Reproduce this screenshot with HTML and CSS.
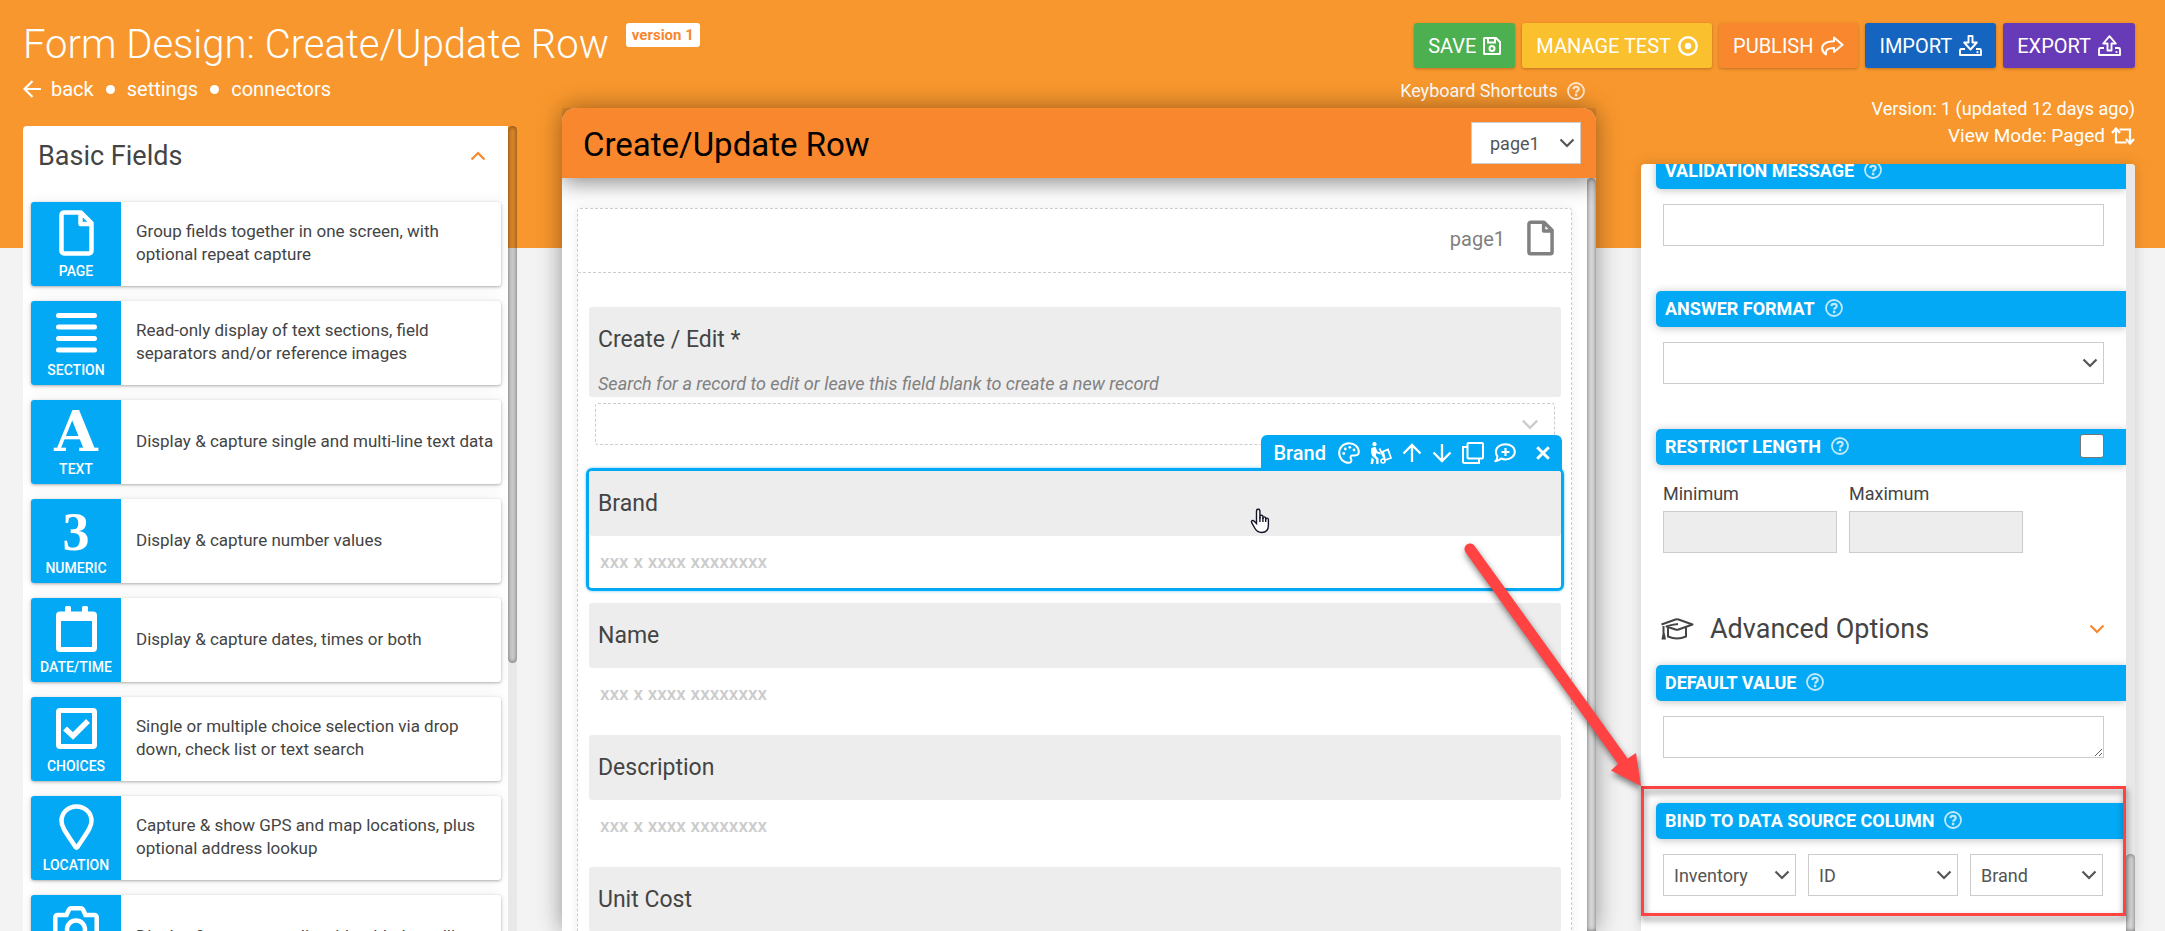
FILE: index.html
```html
<!DOCTYPE html>
<html lang="en">
<head>
<meta charset="utf-8">
<title>Form Design: Create/Update Row</title>
<link rel="stylesheet" href="styles.css">
</head>
<body>
<svg class="defs" aria-hidden="true">
  <symbol id="i-file" viewBox="0 0 35 46"><path d="M5.500 2.500h16.500l10.500 10.500v28a2.500 2.500 0 0 1-2.500 2.500h-25a2.500 2.500 0 0 1-2.500-2.500v-36a2.500 2.500 0 0 1 3-2.500zM21.500 3v11h11" fill="none" stroke="currentColor" stroke-width="4.500" stroke-linejoin="round"/></symbol>
  <symbol id="i-help" viewBox="0 0 18 18"><circle cx="9" cy="9" r="8" fill="none" stroke="currentColor" stroke-width="1.800"/><path d="M6.400 7.100c.1-3.100 5.300-3.100 5.300 0 0 1.900-2.500 1.900-2.600 3.500" fill="none" stroke="currentColor" stroke-width="2.200"/><circle cx="9.100" cy="13" r="1.400" fill="currentColor"/></symbol>
  <symbol id="i-down" viewBox="0 0 16 10"><path d="M1.500 1.500L8 8l6.500-6.500" fill="none" stroke="currentColor" stroke-width="2.200"/></symbol>
</svg>
<div class="page">
  <header class="top">
    <div class="top-left">
      <div class="title-row">
        <h1 class="title">Form Design: Create/Update Row</h1>
        <span class="badge">version 1</span>
      </div>
      <nav class="crumbs">
        <a href="#back" class="back"><svg width="18" height="18" viewBox="0 0 18 18"><path d="M18 9H2M9.500 1L1.500 9l8 8" fill="none" stroke="currentColor" stroke-width="2.200"/></svg>back</a>
        <span class="dot"></span>
        <a href="#settings">settings</a>
        <span class="dot"></span>
        <a href="#connectors">connectors</a>
      </nav>
    </div>
    <div class="top-right">
      <div class="actions">
        <button type="button" class="btn save">SAVE<svg width="18" height="18" viewBox="0 0 18 18"><g fill="none" stroke="currentColor" stroke-width="2"><path d="M1.500 1h11.500l4 4v11.500a.5.5 0 0 1-.5.5h-15a.5.5 0 0 1-.5-.5v-15a.5.5 0 0 1 .5-.5z"/><path d="M5 1v4.500h7V1"/><circle cx="9" cy="11.500" r="2.500"/></g></svg></button>
        <button type="button" class="btn test">MANAGE TEST<svg width="20" height="20" viewBox="0 0 20 20"><circle cx="10" cy="10" r="8.700" fill="none" stroke="currentColor" stroke-width="2.400"/><circle cx="10" cy="10" r="3.200" fill="currentColor"/></svg></button>
        <button type="button" class="btn publish">PUBLISH<svg width="24" height="20" viewBox="0 0 24 20"><path d="M14 1.500l8.500 7.200-8.500 7.200v-4c-6 0-8.500 1.600-8 6.600-6-4.500-6-13 8-13.200z" fill="none" stroke="currentColor" stroke-width="2" stroke-linejoin="round"/></svg></button>
        <button type="button" class="btn import">IMPORT<svg width="23" height="21" viewBox="0 0 23 21"><g fill="none" stroke="currentColor" stroke-width="1.900" stroke-linejoin="round"><path d="M9.500 1h4v6.500h4.300l-6.300 7-6.300-7h4.300z"/><path d="M6 14H2.500a1.500 1.500 0 0 0-1.500 1.500V20h21v-4.500a1.500 1.500 0 0 0-1.500-1.500H17"/></g><circle cx="18.500" cy="17.200" r="1.100" fill="currentColor"/></svg></button>
        <button type="button" class="btn export">EXPORT<svg width="23" height="21" viewBox="0 0 23 21"><g fill="none" stroke="currentColor" stroke-width="1.900" stroke-linejoin="round"><path d="M9.500 15.500h4V8.500h4.300l-6.300-7.300-6.300 7.300h4.300z"/><path d="M6 13H2.500a1.500 1.500 0 0 0-1.500 1.500V20h21v-5.500a1.500 1.500 0 0 0-1.500-1.500H17"/></g><circle cx="18.500" cy="17" r="1.100" fill="currentColor"/></svg></button>
      </div>
      <a href="#shortcuts" class="shortcuts">Keyboard Shortcuts<svg class="help" width="18" height="18"><use href="#i-help"/></svg></a>
    </div>
  </header>

  <main class="columns">
    <aside class="palette">
      <div class="palette-body">
        <div class="palette-head">
          <h2>Basic Fields</h2>
          <button type="button" class="fold up" aria-label="Collapse basic fields"><svg width="16" height="10"><use href="#i-down"/></svg></button>
        </div>
        <ul class="cards">
          <li class="card"><div class="tile"><div class="glyph"><svg width="35" height="46"><use href="#i-file"/></svg></div><span>PAGE</span></div><p>Group fields together in one screen, with optional repeat capture</p></li>
          <li class="card"><div class="tile"><div class="glyph"><svg width="41" height="41" viewBox="0 0 41 41"><path d="M2.500 3.500h36M2.500 15h36M2.500 26.500h36M2.500 38h36" stroke="currentColor" stroke-width="5" stroke-linecap="round"/></svg></div><span>SECTION</span></div><p>Read-only display of text sections, field separators and/or reference images</p></li>
          <li class="card"><div class="tile"><div class="glyph letter">A</div><span>TEXT</span></div><p>Display &amp; capture single and multi-line text data</p></li>
          <li class="card"><div class="tile"><div class="glyph digit">3</div><span>NUMERIC</span></div><p>Display &amp; capture number values</p></li>
          <li class="card"><div class="tile"><div class="glyph"><svg width="41" height="46" viewBox="0 0 41 46"><path d="M4 8h33a1.500 1.500 0 0 1 1.500 1.500V42a1.500 1.500 0 0 1-1.500 1.500H4A1.500 1.500 0 0 1 2.500 42V9.500A1.500 1.500 0 0 1 4 8z" fill="none" stroke="currentColor" stroke-width="5"/><path d="M3 8h35v7H3zM9 1.500a1.500 1.500 0 0 1 1.500-1.500h3a1.500 1.500 0 0 1 1.500 1.500V8H9zM26 1.500a1.500 1.500 0 0 1 1.500-1.500h3a1.500 1.500 0 0 1 1.500 1.500V8h-6z" fill="currentColor"/></svg></div><span>DATE/TIME</span></div><p>Display &amp; capture dates, times or both</p></li>
          <li class="card"><div class="tile"><div class="glyph"><svg width="41" height="41" viewBox="0 0 41 41"><rect x="2.500" y="2.500" width="36" height="36" rx="1.500" fill="none" stroke="currentColor" stroke-width="5"/><path d="M9 20.500l8 7.500 15-15" fill="none" stroke="currentColor" stroke-width="5.500"/></svg></div><span>CHOICES</span></div><p>Single or multiple choice selection via drop down, check list or text search</p></li>
          <li class="card"><div class="tile"><div class="glyph"><svg width="35" height="46" viewBox="0 0 35 46"><path d="M17.500 2.500c8.500 0 15 6.300 15 14.500 0 6-4.500 11.500-14 26q-1 1-2 0C7 28.500 2.500 23 2.500 17c0-8.200 6.500-14.500 15-14.500z" fill="none" stroke="currentColor" stroke-width="4.500"/></svg></div><span>LOCATION</span></div><p>Capture &amp; show GPS and map locations, plus optional address lookup</p></li>
          <li class="card"><div class="tile"><div class="glyph"><svg width="46" height="41" viewBox="0 0 46 41"><path d="M4.500 9h9l2.500-5.500q.5-1.200 2-1.200h10q1.500 0 2 1.200L32.500 9h9a2.200 2.200 0 0 1 2.200 2.200v25a2.200 2.200 0 0 1-2.200 2.200h-37a2.200 2.200 0 0 1-2.200-2.200v-25A2.200 2.200 0 0 1 4.500 9z" fill="none" stroke="currentColor" stroke-width="4.500"/><circle cx="23" cy="23.500" r="9" fill="none" stroke="currentColor" stroke-width="4.500"/></svg></div></div><p>Display &amp; capture media with added scrolling</p></li>
        </ul>
      </div>
      <div class="track"><div class="thumb palette-thumb"></div></div>
    </aside>

    <section class="canvas">
      <div class="canvas-head">
        <h2>Create/Update Row</h2>
        <label class="pick head-pick"><select aria-label="Page"><option>page1</option></select><svg width="16" height="10"><use href="#i-down"/></svg></label>
      </div>
      <div class="canvas-scroll">
        <div class="sheet">
          <div class="sheet-head"><span>page1</span><svg width="27" height="36"><use href="#i-file"/></svg></div>
          <div class="fields">
            <div class="field">
              <div class="field-head tall"><h3>Create / Edit *</h3><p class="hint">Search for a record to edit or leave this field blank to create a new record</p></div>
              <div class="lookup"><svg width="18" height="11"><use href="#i-down"/></svg></div>
            </div>
            <div class="field selected">
              <div class="tools">
                <span class="tools-name">Brand</span>
                <button type="button" aria-label="Appearance"><svg width="22" height="22" viewBox="0 0 22 22"><path d="M11 1.200c5.500 0 9.800 3.800 9.800 8.600 0 2.400-1.600 3.600-3.800 3.600h-2.700c-1.500 0-2.300 1.600-1.500 2.800 1.200 1.900.7 4.600-1.800 4.600C5.500 20.800 1.200 16.500 1.200 11S5.500 1.200 11 1.200z" fill="none" stroke="currentColor" stroke-width="2"/><g fill="currentColor"><circle cx="5.700" cy="11.500" r="1.400"/><circle cx="7.300" cy="7" r="1.400"/><circle cx="11.800" cy="5.300" r="1.400"/><circle cx="16" cy="8" r="1.400"/></g></svg></button>
                <button type="button" aria-label="Move"><svg width="22" height="22" viewBox="0 0 22 22"><circle cx="4.500" cy="2.200" r="2.100" fill="currentColor"/><path d="M1 6.500q2-2 4.500-1.500l2 4.500 3 1v2l-4.200-1.300-.5 2.500 2.700 2.800V22H6.200v-4.500l-4-3.500q-1.500-3-1.200-7.500zM1.500 15.500l2.500 2-1 4.500H.6z" fill="currentColor"/><path d="M9.500 6.500l5 10M13 9.500l5-2 3 8.500-6 2z" fill="none" stroke="currentColor" stroke-width="1.800"/><circle cx="13" cy="19" r="2" fill="none" stroke="currentColor" stroke-width="1.600"/></svg></button>
                <button type="button" aria-label="Move up"><svg width="20" height="20" viewBox="0 0 20 20"><path d="M10 19V2M1.500 10.500L10 2l8.500 8.500" fill="none" stroke="currentColor" stroke-width="2.300"/></svg></button>
                <button type="button" aria-label="Move down"><svg width="20" height="20" viewBox="0 0 20 20"><path d="M10 1v17M1.500 9.500L10 18l8.500-8.500" fill="none" stroke="currentColor" stroke-width="2.300"/></svg></button>
                <button type="button" aria-label="Duplicate"><svg width="22" height="22" viewBox="0 0 22 22"><g fill="none" stroke="currentColor" stroke-width="2"><rect x="5.500" y="1" width="15.500" height="15.500" rx="1"/><path d="M5 5H1v14.500q0 1.500 1.500 1.500H17v-4"/></g></svg></button>
                <button type="button" aria-label="Comment"><svg width="22" height="20" viewBox="0 0 22 20"><path d="M11.500 1.200c5 0 9.300 3 9.300 7.600s-4.300 7.600-9.300 7.600c-1.800 0-3-.3-4.300-.9-1.700 1.600-3.700 2.700-5.900 2.700 1.200-1 2.100-3 2.100-4.800-1-1.300-1.500-2.900-1.500-4.600 0-4.600 4.600-7.600 9.600-7.600z" fill="none" stroke="currentColor" stroke-width="2" stroke-linejoin="round"/><path d="M11.500 5v8M7.500 9h8" stroke="currentColor" stroke-width="2.200"/></svg></button>
                <button type="button" class="close" aria-label="Close"><svg width="14" height="14" viewBox="0 0 14 14"><path d="M1.200 1.200l11.600 11.600M12.800 1.200L1.200 12.800" stroke="currentColor" stroke-width="3"/></svg></button>
              </div>
              <div class="field-head"><h3>Brand</h3></div>
              <p class="mask">xxx x xxxx xxxxxxxx</p>
              <svg class="cursor" width="20" height="26" viewBox="0 0 20 26"><path d="M6.500 15.500V3a1.700 1.700 0 0 1 3.400 0v7.500V8.500a1.500 1.500 0 0 1 3 .4v2-1.200a1.500 1.500 0 0 1 2.800.4v1.700-.8a1.400 1.400 0 0 1 2.700.5V17c0 4.500-2.500 7.500-6.700 7.500-4 0-5.700-2-7-4.500l-3-5.300c-.9-1.800 1-3 2.300-1.700z" fill="#fff" stroke="#15152a" stroke-width="1.400"/><path d="M9.900 9v5M12.900 10v4M15.700 11v3" stroke="#15152a" stroke-width="1.400"/></svg>
            </div>
            <div class="field"><div class="field-head"><h3>Name</h3></div><p class="mask">xxx x xxxx xxxxxxxx</p></div>
            <div class="field"><div class="field-head"><h3>Description</h3></div><p class="mask">xxx x xxxx xxxxxxxx</p></div>
            <div class="field"><div class="field-head"><h3>Unit Cost</h3></div></div>
          </div>
        </div>
        <div class="track"><div class="thumb canvas-thumb"></div></div>
      </div>
    </section>

    <aside class="side">
      <p class="version">Version: 1 (updated 12 days ago)</p>
      <a href="#view" class="view">View Mode: Paged<svg width="24" height="18" viewBox="0 0 24 18"><g fill="none" stroke="currentColor" stroke-width="2.200"><path d="M5 2v13.500h10.500M1 6l4-4.500L9 6M19 16V2.500H8.500M15 12l4 4.500 4-4.500"/></g></svg></a>
      <div class="props">
        <div class="props-body">
          <div class="prop">
            <div class="bar"><label for="msg">VALIDATION MESSAGE</label><svg class="help" width="18" height="18"><use href="#i-help"/></svg></div>
            <input id="msg" class="box" type="text">
          </div>
          <div class="prop">
            <div class="bar"><label for="fmt">ANSWER FORMAT</label><svg class="help" width="18" height="18"><use href="#i-help"/></svg></div>
            <div class="pick wide"><select id="fmt"><option></option></select><svg width="16" height="10"><use href="#i-down"/></svg></div>
          </div>
          <div class="prop">
            <div class="bar"><label for="restrict">RESTRICT LENGTH</label><svg class="help" width="18" height="18"><use href="#i-help"/></svg><input id="restrict" class="tick" type="checkbox"></div>
            <div class="range">
              <label>Minimum<input type="text" disabled></label>
              <label>Maximum<input type="text" disabled></label>
            </div>
          </div>
          <div class="advanced">
            <svg width="34" height="23" viewBox="0 0 34 23"><g fill="none" stroke="currentColor" stroke-width="2" stroke-linejoin="round"><path d="M1.500 6.500L15.500 1.500q1.500-.5 3 0L32.500 6.500 18.500 11.500q-1.500.5-3 0L6.500 8.500Q12 6.500 18 6M8 9.500v9q9 4 18 0v-9M3.500 8v7"/></g><path d="M1.500 21.500l1.200-6.500h2l1.300 6.500z" fill="currentColor"/></svg>
            <h2>Advanced Options</h2>
            <button type="button" class="fold" aria-label="Toggle advanced options"><svg width="16" height="10"><use href="#i-down"/></svg></button>
          </div>
          <div class="prop">
            <div class="bar"><label for="def">DEFAULT VALUE</label><svg class="help" width="18" height="18"><use href="#i-help"/></svg></div>
            <textarea id="def" class="box"></textarea>
          </div>
          <div class="prop">
            <div class="bar"><span>BIND TO DATA SOURCE COLUMN</span><svg class="help" width="18" height="18"><use href="#i-help"/></svg></div>
            <div class="binds">
              <label class="pick"><select aria-label="Data source"><option>Inventory</option></select><svg width="16" height="10"><use href="#i-down"/></svg></label>
              <label class="pick"><select aria-label="Key column"><option>ID</option></select><svg width="16" height="10"><use href="#i-down"/></svg></label>
              <label class="pick"><select aria-label="Bound column"><option>Brand</option></select><svg width="16" height="10"><use href="#i-down"/></svg></label>
            </div>
          </div>
        </div>
        <div class="track"><div class="thumb props-thumb"></div></div>
      </div>
      <div class="callout"></div>
      <svg class="arrow" width="190" height="256" viewBox="0 0 190 256"><path d="M9 9L161 220" stroke="#ff4343" stroke-width="11" stroke-linecap="round"/><path d="M180 246l-30-15.500 7-6.500 9-5 9-6z" fill="#ff4343"/></svg>
    </aside>
  </main>
</div>
</body>
</html>
```

FILE: styles.css
```css
* { box-sizing: border-box; }
body { margin: 0; font-family: Roboto, "Liberation Sans", sans-serif; color: #444; }
h1, h2, h3, p, ul { margin: 0; padding: 0; font-weight: 400; }
a { color: inherit; text-decoration: none; }
button { font: inherit; color: inherit; border: 0; background: none; padding: 0; cursor: pointer; }
svg { display: block; flex: none; }
.defs { position: absolute; width: 0; height: 0; }

.page { height: 100vh; overflow: hidden; display: flex; flex-direction: column; background: linear-gradient(#f8972d 248px, #f3f3f3 248px); }

.top { display: flex; justify-content: space-between; height: 108px; flex: none; padding: 16px 30px 0 23px; color: #fff; }
.title-row { display: flex; gap: 17px; }
.title { font-size: 40px; line-height: 57px; font-weight: 300; white-space: nowrap; }
.badge { margin-top: 7px; height: 24px; padding: 0 6px; border-radius: 3px; background: #fff; color: #f8872d; font-size: 15px; line-height: 25px; font-weight: 700; white-space: nowrap; }
.crumbs { display: flex; align-items: center; gap: 12px; height: 32px; font-size: 20px; }
.back { display: flex; align-items: center; gap: 10px; }
.dot { width: 9px; height: 9px; border-radius: 50%; background: #fff; }

.top-right { padding-top: 7px; }
.actions { display: flex; gap: 7px; padding-left: 14px; }
.btn { display: flex; align-items: center; gap: 7px; height: 45px; padding: 0 14px; border-radius: 3px; font-size: 20px; color: #fff; box-shadow: 0 1px 3px rgba(0, 0, 0, .25); }
.save { background: #4caf50; }
.test { background: #fbc02d; }
.publish { background: #f8872d; }
.import { background: #1565c0; }
.export { background: #673ab7; }
.shortcuts { display: inline-flex; align-items: center; gap: 9px; margin-top: 11px; font-size: 18px; line-height: 24px; }
.help { opacity: .75; }

.columns { flex: 1; min-height: 0; display: grid; grid-template-columns: 494fr 1034fr 494fr; gap: 45px; padding: 0 30px 0 23px; }
.columns > * { min-width: 0; min-height: 0; }

.track { width: 9px; flex: none; display: flex; flex-direction: column; background: #e8e8e8; }
.thumb { border-radius: 5px; background: #d8d8d8; box-shadow: inset 0 0 4px rgba(0, 0, 0, .5); }

.palette { display: flex; margin-top: 18px; }
.palette-body { flex: 1; overflow: hidden; padding: 0 7px 0 8px; background: #fff; border-radius: 4px 0 0 0; }
.palette .track { background: linear-gradient(transparent 122px, #e8e8e8 122px); }
.palette-thumb { height: 537px; background: rgba(0, 0, 0, .12); }
.palette-head { display: flex; align-items: center; justify-content: space-between; height: 60px; padding: 0 15px 0 7px; margin-bottom: 16px; }
.palette-head h2, .advanced h2 { font-size: 27px; line-height: 32px; }
.fold { color: #f8872d; }
.up svg { transform: rotate(180deg); }
.cards { list-style: none; display: grid; gap: 15px; }
.card { display: flex; align-items: center; height: 84px; border-radius: 3px; box-shadow: 0 1px 3px rgba(0, 0, 0, .3), 0 0 14px rgba(0, 0, 0, .07); }
.card p { flex: 1; padding: 0 7px 2px 15px; font-size: 17px; line-height: 23px; }
.tile { width: 90px; height: 84px; padding-top: 7px; display: flex; flex-direction: column; align-items: center; gap: 5px; border-radius: 3px 0 0 3px; background: #03a9f4; color: #fff; font-size: 14px; line-height: 18px; font-weight: 500; }
.glyph { height: 48px; display: flex; align-items: center; }
.letter { font-family: "DejaVu Serif", serif; font-size: 56px; font-weight: 700; line-height: 48px; }
.digit { padding-top: 4px; font-family: "Liberation Serif", serif; font-size: 54px; font-weight: 700; line-height: 48px; }

.canvas { display: flex; flex-direction: column; background: #fff; border-radius: 14px 14px 0 0; box-shadow: 0 0 24px rgba(0, 0, 0, .4); }
.canvas-head { position: relative; display: flex; align-items: center; justify-content: space-between; height: 70px; flex: none; padding: 0 15px 0 21px; border-radius: 14px 14px 0 0; background: #f8872d; box-shadow: 0 5px 22px rgba(0, 0, 0, .45); clip-path: inset(0 0 -30px 0); }
.canvas-head h2 { padding-top: 3px; color: #000; font-size: 33px; line-height: 40px; }
.canvas-scroll { flex: 1; min-height: 0; display: flex; overflow: hidden; }
.canvas-thumb { flex: 1; border-radius: 5px 5px 0 0; }
.sheet { flex: 1; height: 900px; margin: 30px 15px 0; border: 1px dashed #ccc; border-radius: 3px; background: #fff; box-shadow: 0 0 10px rgba(0, 0, 0, .08); }
.sheet-head { display: flex; align-items: center; justify-content: flex-end; gap: 22px; height: 64px; padding: 0 17px 6px 0; border-bottom: 1px dashed #ccc; color: #808080; font-size: 20px; line-height: 42px; }
.sheet-head span { padding-top: 3px; }
.fields { padding: 34px 7px 0 8px; }
.field { position: relative; margin-bottom: 9px; border: 3px solid transparent; border-radius: 6px; }
.field:first-child { margin-top: -3px; margin-bottom: 20px; }
.selected { border-color: #03a9f4; box-shadow: 0 0 3px rgba(3, 169, 244, .6); }
.field-head { height: 65px; padding: 19px 9px 0; border-radius: 3px; background: #ededed; }
.tall { height: 90px; }
.field h3 { font-size: 23px; line-height: 28px; }
.hint { margin-top: 19px; color: #808080; font-size: 18px; line-height: 22px; font-style: italic; }
.lookup { display: flex; align-items: center; justify-content: flex-end; height: 42px; margin: 6px 6px 0; padding: 0 15px; border: 1px dashed #ccc; border-radius: 3px; color: #ccc; }
.mask { padding: 14px 11px 14px; color: #ccc; font-size: 19px; line-height: 24px; font-weight: 500; }
.tools { position: absolute; right: -1px; bottom: 100%; display: flex; align-items: center; gap: 10px; height: 36px; padding: 0 12px; border-radius: 6px 6px 0 0; background: #03a9f4; color: #fff; }
.tools-name { margin-right: 2px; font-size: 20px; font-weight: 500; }
.close { margin-left: 10px; }
.cursor { position: absolute; left: 68%; top: 37px; }

.side { position: relative; display: flex; flex-direction: column; align-items: stretch; }
.version { margin-top: -13px; }
.version, .view { color: #fff; font-size: 18px; line-height: 27px; text-align: right; }
.view { display: flex; align-items: center; justify-content: flex-end; gap: 6px; font-size: 19px; margin-bottom: 15px; }
.props { flex: 1; min-height: 0; display: flex; overflow: hidden; background: #fff; border-radius: 4px 4px 0 0; box-shadow: 0 0 14px rgba(0, 0, 0, .15); }
.props-body { flex: 1; min-width: 0; margin-top: -11px; padding-left: 15px; }
.prop { margin-bottom: 45px; }
.bar { display: flex; align-items: center; gap: 10px; height: 36px; margin-bottom: 15px; padding: 0 22px 2px 9px; border-radius: 5px 0 0 5px; background: #03a9f4; color: #fff; font-size: 18px; font-weight: 700; box-shadow: 0 1px 8px rgba(0, 0, 0, .25); }
.box { display: block; width: calc(100% - 29px); height: 42px; margin: 0 22px 0 7px; border: 1px solid #ccc; background: #fff; font: inherit; font-size: 18px; }
.tick { appearance: none; width: 24px; height: 24px; margin: 0 0 0 auto; border: 1px solid #767676; border-radius: 3px; background: #fff; }
.pick { position: relative; display: block; }
.pick select { appearance: none; display: block; width: 100%; height: 42px; padding: 0 30px 0 10px; border: 1px solid #ccc; border-radius: 0; background: #fff; color: #555; font: 18px Roboto, sans-serif; }
.pick svg { position: absolute; right: 6px; top: 16px; color: #555; pointer-events: none; }
.head-pick { width: 110px; }
.head-pick select { padding-left: 18px; }
.wide { margin: 0 22px 0 7px; }
.range { display: grid; grid-template-columns: 174fr 174fr 69fr; gap: 12px; padding: 0 22px 0 7px; }
.range label { font-size: 18px; line-height: 27px; }
.range input { display: block; width: 100%; height: 42px; margin-top: 4px; border: 1px solid #ccc; background: #ededed; }
.advanced { display: flex; align-items: center; gap: 16px; height: 36px; margin: 58px 21px 18px 4px; }
.advanced .fold { margin-left: auto; }
.binds { display: grid; grid-template-columns: 133fr 150fr 133fr; gap: 12px; padding: 0 23px 0 7px; }
.props-thumb { margin-top: 690px; flex: 1; border-radius: 5px 5px 0 0; }
.callout { position: absolute; top: 678px; left: 0; right: 9px; height: 130px; border: 3px solid #ff4343; filter: drop-shadow(1px 4px 3px rgba(0, 0, 0, .5)); }
.arrow { position: absolute; top: 432px; left: -180px; filter: drop-shadow(1px 4px 3px rgba(0, 0, 0, .5)); }
```
